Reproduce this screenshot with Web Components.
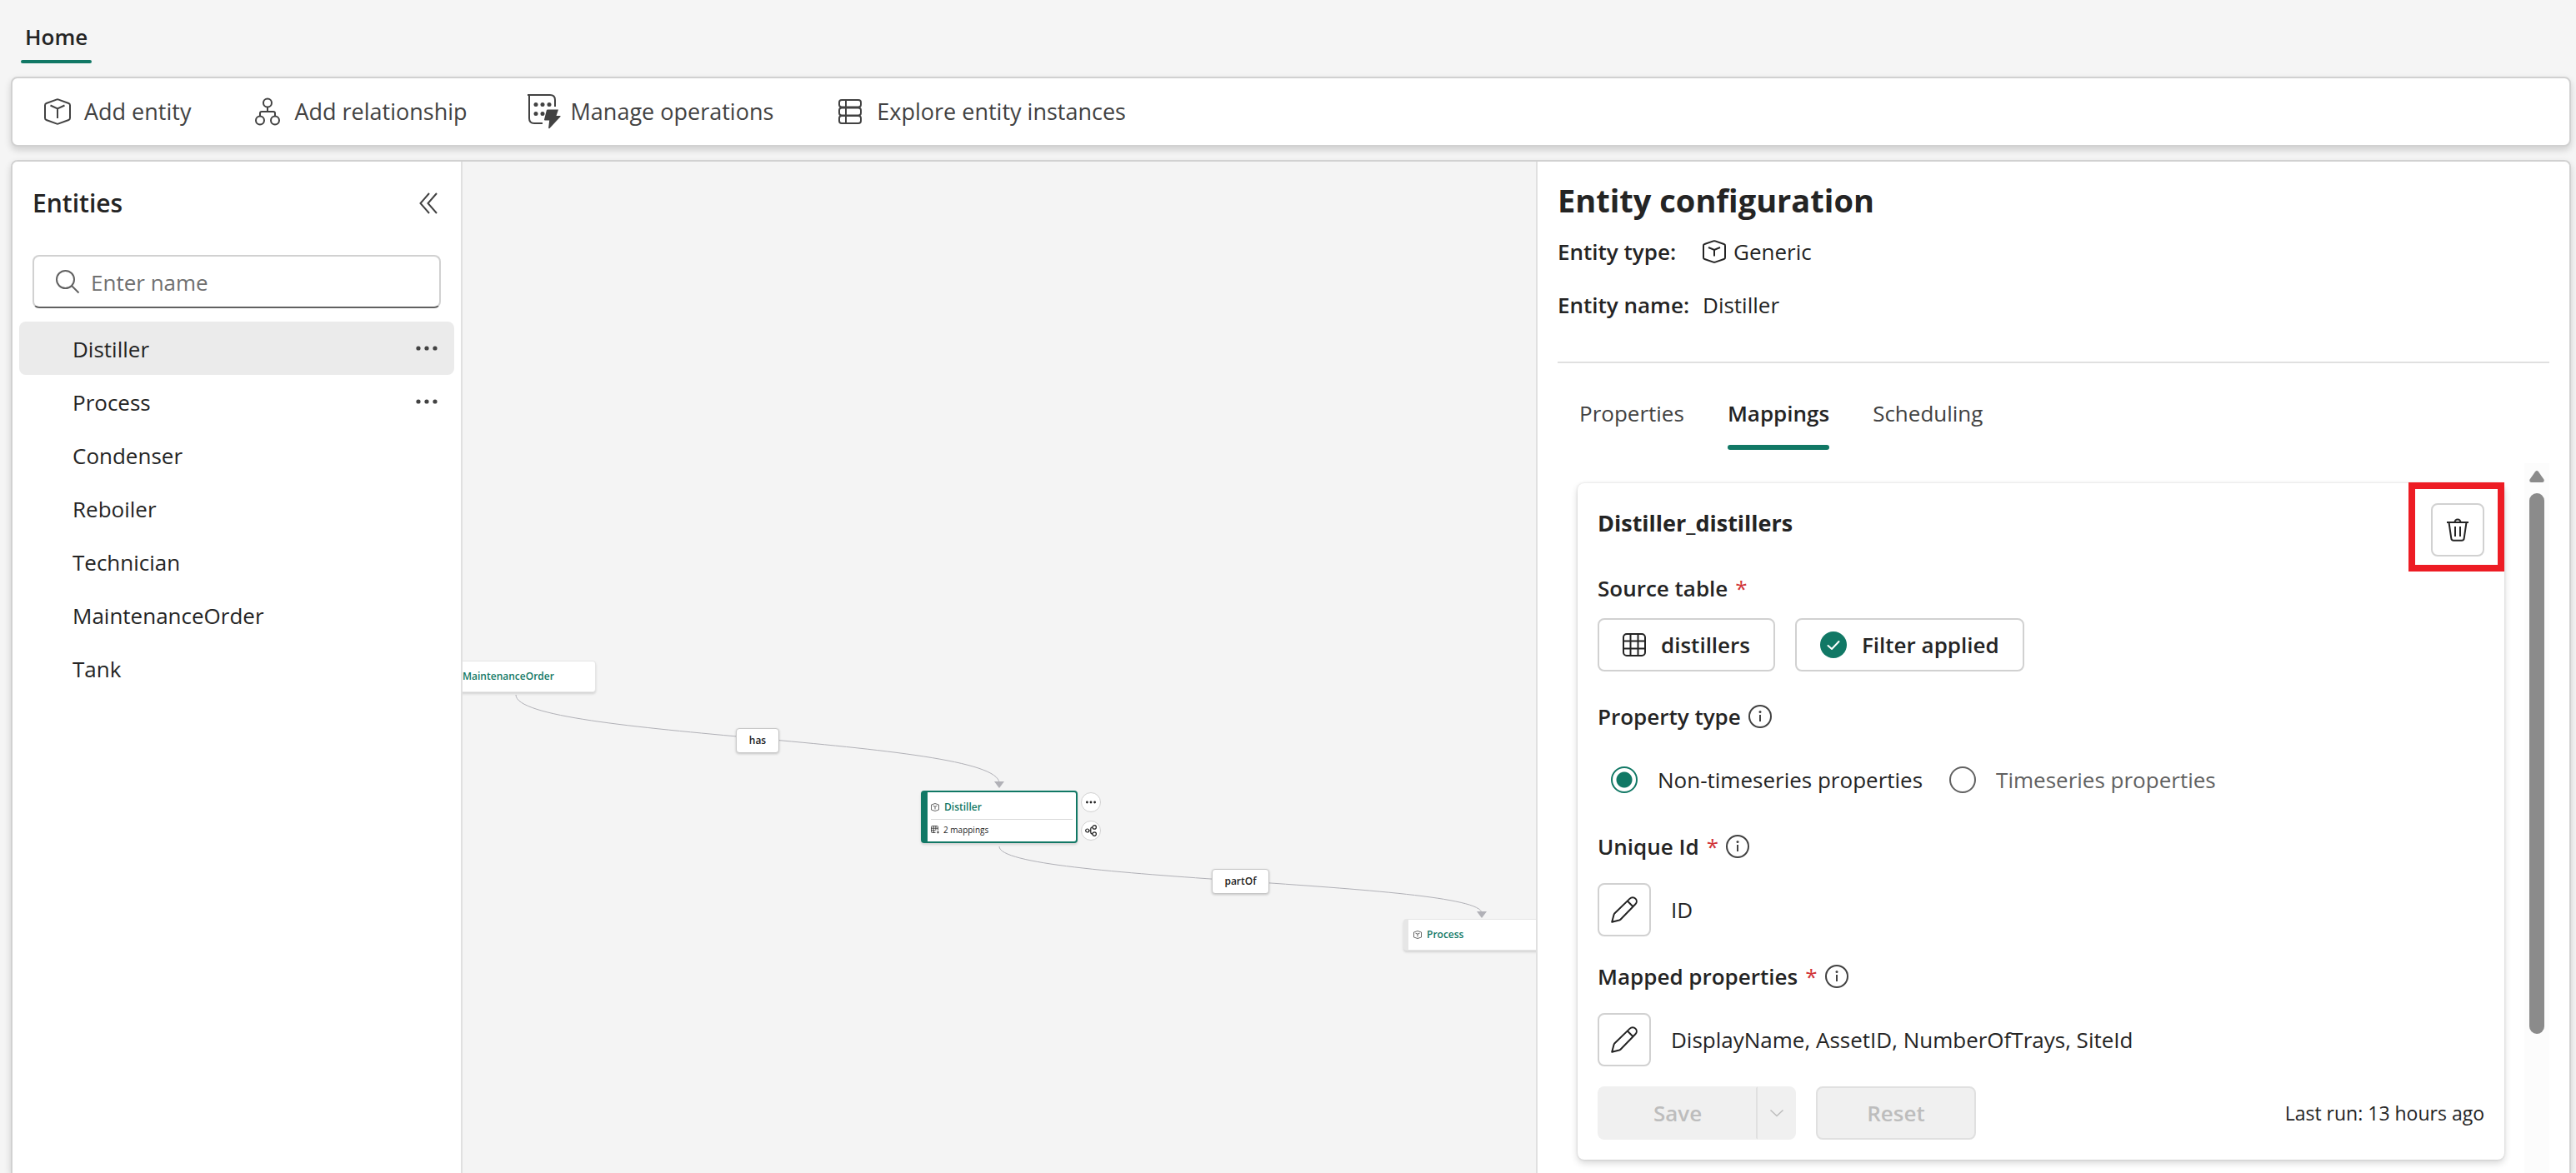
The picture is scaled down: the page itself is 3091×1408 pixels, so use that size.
<!DOCTYPE html>
<html lang="en">
<head>
<meta charset="utf-8">
<title>Entity configuration</title>
<style>
	html, body {
		margin: 0;
		height: 100%;
	}

	body {
		background: #f5f5f5;
		color: #242424;
		font-family: "Open Sans", "Noto Sans", sans-serif;
		font-size: 26px;
		line-height: 40px;
		overflow: hidden;
	}
</style>
</head>
<body>
<ontology-app></ontology-app>

<script>
// name: [width, height, markup]
const ICONS = {
	cube: [32, 32, '<path d="M14.6 1.6a4 4 0 0 1 2.8 0L29.4 6a2.4 2.4 0 0 1 1.6 2.2v15.6a2.4 2.4 0 0 1-1.6 2.2l-12 4.4a4 4 0 0 1-2.8 0L2.6 26A2.4 2.4 0 0 1 1 23.8V8.2A2.4 2.4 0 0 1 2.6 6Z"/><path d="M7.5 8.5 16 12.5l8.5-4M16 12.5V24"/>'],
	cubeSmall: [28, 28, '<path d="M12.8 1.4a3.5 3.5 0 0 1 2.4 0L25.6 5a2 2 0 0 1 1.4 2v14a2 2 0 0 1-1.4 2l-10.4 3.6a3.5 3.5 0 0 1-2.4 0L2.4 23A2 2 0 0 1 1 21V7a2 2 0 0 1 1.4-2Z"/><path d="m7 9 7 3 7-3M14 12v7.5"/>'],
	relationship: [30, 34, '<circle cx="15" cy="6.5" r="5"/><circle cx="6" cy="27.5" r="5"/><circle cx="24" cy="27.5" r="5"/><path d="M15 11.5V17M6 22.5V19a2 2 0 0 1 2-2h14a2 2 0 0 1 2 2v3.5"/>'],
	operations: [40, 42, '<path d="M0 1h27c4 0 6 2.5 6 6v8M2 1v28c0 4 2 6 6 6h10"/><g fill="currentColor" stroke="none"><circle cx="10" cy="12.5" r="2.5"/><circle cx="18" cy="12.5" r="2.5"/><circle cx="26" cy="12.5" r="2.5"/><circle cx="10" cy="23.5" r="2.5"/><circle cx="18" cy="23.5" r="2.5"/><path d="M24 18.5h13L34.5 26H39q1 0 .5 1L26.500 41q-1.500.800-1.300-1l1-8.500H21q-1.200 0-1-1l2.800-11q.3-1 1.200-1Z"/></g>'],
	instances: [28, 30, '<rect x="1" y="1" width="26" height="8.500" rx="3"/><rect x="1" y="10.500" width="26" height="9" rx="3"/><rect x="1" y="20" width="26" height="9" rx="3"/><path d="M9 1v28"/>'],
	collapse: [22, 26, '<path d="M12 1 1.500 13 12 25M21 1 10.500 13 21 25"/>'],
	search: [28, 28, '<circle cx="11.500" cy="11.500" r="10.500"/><path d="m19 19 8.500 8.500"/>'],
	more: [26, 6, '<g fill="currentColor" stroke="none"><circle cx="3" cy="3" r="2.600"/><circle cx="13" cy="3" r="2.600"/><circle cx="23" cy="3" r="2.600"/></g>'],
	moreSmall: [12, 4, '<g fill="currentColor" stroke="none"><circle cx="1.400" cy="2" r="1.400"/><circle cx="6" cy="2" r="1.400"/><circle cx="10.600" cy="2" r="1.400"/></g>'],
	table: [28, 28, '<rect x="1" y="1" width="26" height="26" rx="4"/><path d="M9.500 1v26M18.500 1v26M1 9.500h26M1 18.500h26"/>'],
	check: [32, 32, '<circle cx="16" cy="16" r="16" fill="#117865" stroke="none"/><path stroke="#fff" stroke-linecap="round" stroke-linejoin="round" d="m9.500 17 4.500 4 8.500-9"/>'],
	info: [28, 28, '<circle cx="14" cy="14" r="13"/><path d="M14 12v8"/><circle cx="14" cy="8.500" r="1.500" fill="currentColor" stroke="none"/>'],
	pencil: [32, 32, '<path stroke-linejoin="round" d="M1.200 30.800 3.500 22q.3-1 1-1.700L22.700 2.600a4.700 4.700 0 0 1 6.700 6.700L11.700 27.500q-.7.7-1.700 1ZM19.800 5.500l6.700 6.700"/>'],
	trash: [26, 28, '<path d="M0 5h26M9.500 5a3.500 3.500 0 0 1 7 0M2.500 5l2.800 19a3 3 0 0 0 3 2.800h9.400a3 3 0 0 0 3-2.800l2.800-19M10 10v12M16 10v12"/>'],
	chevron: [16, 8, '<path stroke-width="1.500" d="m.5.5 7.500 7 7.500-7"/>'],
	cubeTiny: [10, 10, '<path stroke-width=".8" d="M5 .5 9.500 2v6L5 9.500.5 8V2ZM2.500 3.200 5 4.200l2.500-1M5 4.200V7.500"/>'],
	tableTiny: [10, 10, '<path stroke-width=".8" d="M5.500 8.500H1.500a1 1 0 0 1-1-1v-6a1 1 0 0 1 1-1h6a1 1 0 0 1 1 1V5.500M3.200.5v8M5.900.5v5M.5 3.200h8M.5 5.900h5M7 8h3M8.500 6.500v3"/>'],
	share: [14, 14, '<g stroke-width="1.200"><circle cx="2.700" cy="7" r="2"/><circle cx="11.200" cy="2.900" r="2.200"/><circle cx="11.200" cy="11.100" r="2.200"/><path d="M4.700 7H6.800M9 2.900q-2.200 0-2.200 2v4.200q0 2 2.200 2"/></g>']
};

class FlatIcon extends HTMLElement {
	constructor() {
		super();
		this.attachShadow({ mode: 'open' });
	}

	connectedCallback() {
		const [w, h, body] = ICONS[this.getAttribute('name')];
		this.shadowRoot.innerHTML = `
<style>
	:host { display: inline-flex; flex: none; }
	svg { display: block; overflow: visible; }
</style>
<svg width="${w}" height="${h}" viewBox="0 0 ${w} ${h}" fill="none" stroke="currentColor" stroke-width="2" aria-hidden="true">${body}</svg>`;
	}
}
customElements.define('flat-icon', FlatIcon);

// Registers an element whose shadow root is a plain clone of its template
function define(name, html) {
	const template = document.createElement('template');
	template.innerHTML = html;

	customElements.define(name, class extends HTMLElement {
		constructor() {
			super();
			this.attachShadow({ mode: 'open' });
			this.shadowRoot.appendChild(template.content.cloneNode(true));
		}
	});
}

/* ---------- toolbar ---------- */

define('tool-button', `
<style>
	:host { display: block; }
	button {
		display: flex;
		align-items: center;
		gap: 12px;
		padding: 0;
		border: none;
		background: none;
		color: #424242;
		font: inherit;
		font-size: 27px;
		font-weight: 500;
		white-space: nowrap;
		cursor: pointer;
	}
	.icon {
		display: flex;
		justify-content: center;
		width: 40px;
	}
</style>
<button type="button"><span class="icon"><slot name="icon"></slot></span><slot></slot></button>
`);

define('app-toolbar', `
<style>
	:host {
		display: flex;
		align-items: center;
		gap: 72px;
		height: 80px;
		padding: 0 34px;
		border: 2px solid #d1d1d1;
		border-radius: 8px;
		background: #fff;
		box-shadow: 0 4px 8px rgba(0, 0, 0, .16);
	}
</style>
<tool-button><flat-icon slot="icon" name="cube"></flat-icon>Add entity</tool-button>
<tool-button><flat-icon slot="icon" name="relationship"></flat-icon>Add relationship</tool-button>
<tool-button><flat-icon slot="icon" name="operations"></flat-icon>Manage operations</tool-button>
<tool-button><flat-icon slot="icon" name="instances"></flat-icon>Explore entity instances</tool-button>
`);

/* ---------- entity list ---------- */

class EntityItem extends HTMLElement {
	constructor() {
		super();
		this.attachShadow({ mode: 'open' });
		this.shadowRoot.innerHTML = `
<style>
	:host {
		display: flex;
		align-items: center;
		height: 64px;
		padding: 0 20px 0 64px;
		border-radius: 8px;
	}
	:host([selected]) { background: #ebebeb; }
	span {
		flex: 1;
		padding-top: 2px;
	}
	button {
		display: flex;
		padding: 8px 0;
		border: none;
		background: none;
		color: #424242;
		cursor: pointer;
	}
	:host(:not([menu])) button { display: none; }
</style>
<span><slot></slot></span>
<button type="button" aria-label="More options"><flat-icon name="more"></flat-icon></button>`;
	}

	connectedCallback() {
		this.setAttribute('role', 'listitem');
		this.addEventListener('click', this._select);
	}

	disconnectedCallback() {
		this.removeEventListener('click', this._select);
	}

	_select() {
		for (const item of this.parentNode.querySelectorAll('entity-item')) {
			item.toggleAttribute('selected', item === this);
		}
	}
}
customElements.define('entity-item', EntityItem);

define('entity-panel', `
<style>
	:host {
		display: block;
		box-sizing: border-box;
		padding: 28px 8px 0;
		border-right: 2px solid #e0e0e0;
		background: #fff;
	}
	header {
		display: flex;
		align-items: center;
		justify-content: space-between;
		margin: 0 20px 40px 16px;
	}
	h2 {
		margin: 0;
		font-size: 30px;
		line-height: 44px;
		font-weight: 600;
	}
	header button {
		display: flex;
		padding: 0;
		border: none;
		background: none;
		color: #424242;
	}
	.search {
		display: flex;
		align-items: center;
		gap: 14px;
		height: 60px;
		margin: 0 16px 16px;
		padding: 0 26px;
		border: 2px solid #d1d1d1;
		border-bottom-color: #616161;
		border-radius: 8px;
		color: #616161;
	}
	input {
		flex: 1;
		min-width: 0;
		padding: 2px 0 0;
		border: none;
		outline: none;
		background: none;
		font: inherit;
	}
	input::placeholder { color: #707070; }
</style>
<header>
	<h2>Entities</h2>
	<button type="button" aria-label="Collapse"><flat-icon name="collapse"></flat-icon></button>
</header>
<label class="search">
	<flat-icon name="search"></flat-icon>
	<input type="text" placeholder="Enter name" aria-label="Enter name">
</label>
<div role="list">
	<entity-item selected menu>Distiller</entity-item>
	<entity-item menu>Process</entity-item>
	<entity-item>Condenser</entity-item>
	<entity-item>Reboiler</entity-item>
	<entity-item>Technician</entity-item>
	<entity-item>MaintenanceOrder</entity-item>
	<entity-item>Tank</entity-item>
</div>
`);

/* ---------- graph ---------- */

define('graph-node', `
<style>
	:host {
		position: absolute;
		box-sizing: border-box;
		width: 188px;
		padding: 0 6px;
		border: 1px solid #e6e6e6;
		border-left-width: 6px;
		border-radius: 4px;
		background: #fff;
		box-shadow: 0 2px 3px rgba(0, 0, 0, .14);
		font-size: 12px;
		line-height: 16px;
	}
	:host([selected]) {
		padding: 4px 4px 2px;
		border: 2px solid #117865;
		border-left-width: 8px;
	}
	.title {
		display: flex;
		align-items: center;
		gap: 6px;
		height: 36px;
		color: #424242;
	}
	:host([selected]) .title { height: 28px; }
	b {
		color: #117865;
		font-weight: 600;
	}
</style>
<div class="title"><flat-icon name="cubeTiny"></flat-icon><b><slot></slot></b></div>
<slot name="details"></slot>
`);

define('edge-label', `
<style>
	:host {
		position: absolute;
		box-sizing: border-box;
		height: 30px;
		border: 1px solid #c7c7c7;
		border-radius: 4px;
		background: #fff;
		box-shadow: 0 1px 3px rgba(0, 0, 0, .2);
		font-size: 12px;
		line-height: 28px;
		font-weight: 600;
		text-align: center;
	}
</style>
<slot></slot>
`);

define('graph-canvas', `
<style>
	:host {
		display: block;
		position: relative;
		overflow: hidden;
		background: #f4f4f4;
	}
	.edges {
		position: absolute;
		left: 0;
		top: 0;
		width: 100%;
		height: 100%;
	}
	.details {
		display: flex;
		align-items: center;
		gap: 5px;
		height: 24px;
		border-top: 1px solid #d9d9d9;
		font-size: 10px;
	}
	.action {
		position: absolute;
		display: flex;
		align-items: center;
		justify-content: center;
		width: 24px;
		height: 24px;
		padding: 0;
		border: 1px solid #d1d1d1;
		border-radius: 50%;
		background: #fff;
		color: #242424;
	}
	#order { left: -28px; top: 599px; }
	#distiller { left: 550px; top: 755px; }
	#process { left: 1129px; top: 909px; }
	#has { left: 328px; top: 680px; width: 52px; }
	#part-of { left: 899px; top: 849px; width: 69px; }
	#menu { left: 742px; top: 757px; }
	#expand { left: 742px; top: 791px; }
</style>
<svg class="edges" fill="none" stroke="#b1b1b7" aria-hidden="true">
	<path d="M64 640C64 692 644 692 644 746M644 822C644 864 1223 864 1223 902"/>
	<path fill="#b1b1b7" stroke="none" d="M638 744h12l-6 8ZM1217 900h12l-6 8Z"/>
</svg>
<graph-node id="order">MaintenanceOrder</graph-node>
<edge-label id="has">has</edge-label>
<graph-node id="distiller" selected>Distiller
	<div class="details" slot="details"><flat-icon name="tableTiny"></flat-icon>2 mappings</div>
</graph-node>
<button class="action" id="menu" type="button" aria-label="More"><flat-icon name="moreSmall"></flat-icon></button>
<button class="action" id="expand" type="button" aria-label="Expand"><flat-icon name="share"></flat-icon></button>
<edge-label id="part-of">partOf</edge-label>
<graph-node id="process">Process</graph-node>
`);

/* ---------- configuration ---------- */

define('outline-button', `
<style>
	:host { display: block; }
	button {
		display: flex;
		align-items: center;
		justify-content: center;
		gap: 18px;
		box-sizing: border-box;
		min-width: 64px;
		height: 64px;
		padding: 0 var(--pad, 0);
		border: 2px solid #d1d1d1;
		border-radius: 8px;
		background: #fff;
		color: #242424;
		font: inherit;
		font-weight: 600;
		white-space: nowrap;
		cursor: pointer;
	}
</style>
<button type="button"><slot></slot></button>
`);

class FieldLabel extends HTMLElement {
	constructor() {
		super();
		this.attachShadow({ mode: 'open' });
		this.shadowRoot.innerHTML = `
<style>
	:host {
		display: flex;
		align-items: center;
		gap: 9px;
		height: 40px;
		font-weight: 600;
	}
	.required {
		color: #d13438;
		font-weight: 400;
	}
	flat-icon { color: #424242; }
	:host(:not([required])) .required,
	:host(:not([info])) flat-icon { display: none; }
</style>
<slot></slot><span class="required">*</span><flat-icon name="info"></flat-icon>`;
	}
}
customElements.define('field-label', FieldLabel);

define('mapping-card', `
<style>
	:host {
		display: block;
		padding: 24px;
		border-radius: 8px;
		background: #fff;
		box-shadow: 0 0 3px rgba(0, 0, 0, .14), 0 4px 8px rgba(0, 0, 0, .16);
	}
	header {
		display: flex;
		align-items: flex-start;
		justify-content: space-between;
		margin-bottom: 18px;
	}
	h3 {
		margin: 4px 0 0;
		font-size: 27px;
		font-weight: 700;
	}
	.delete { position: relative; }
	.highlight {
		position: absolute;
		inset: -25px -24px -18px -27px;
		border: 8px solid #ed1c24;
		pointer-events: none;
	}
	.row {
		display: flex;
		align-items: center;
		gap: 24px;
	}
	.source {
		--pad: 28px;
		margin: 16px 0 34px;
	}
	fieldset {
		display: flex;
		gap: 32px;
		margin: 36px 0 40px;
		padding: 0 0 0 16px;
		border: none;
	}
	fieldset label {
		display: flex;
		align-items: center;
		gap: 24px;
		white-space: nowrap;
	}
	label.muted { color: #616161; }
	input {
		appearance: none;
		box-sizing: border-box;
		width: 32px;
		height: 32px;
		margin: 0;
		border: 2px solid #616161;
		border-radius: 50%;
	}
	input:checked {
		border-color: #117865;
		background: radial-gradient(circle, #117865 9px, transparent 10px);
	}
	.value { margin: 24px 0 28px; }
	.value + .actions { margin-top: -4px; }
	.actions button {
		box-sizing: border-box;
		height: 64px;
		padding: 0;
		border: 2px solid #f0f0f0;
		background: #f0f0f0;
		color: #bdbdbd;
		font: inherit;
		font-weight: 600;
	}
	.split { display: flex; }
	.split .save {
		width: 192px;
		border-right-color: #e0e0e0;
		border-radius: 8px 0 0 8px;
	}
	.split .open {
		display: flex;
		align-items: center;
		justify-content: center;
		width: 46px;
		border-radius: 0 8px 8px 0;
	}
	.actions .reset {
		width: 192px;
		border-color: #e0e0e0;
		border-radius: 8px;
	}
	small {
		margin-left: auto;
		font-size: 23px;
	}
</style>
<header>
	<h3>Distiller_distillers</h3>
	<div class="delete">
		<outline-button aria-label="Delete mapping"><flat-icon name="trash"></flat-icon></outline-button>
		<div class="highlight"></div>
	</div>
</header>
<field-label required>Source table</field-label>
<div class="row source">
	<outline-button><flat-icon name="table"></flat-icon>distillers</outline-button>
	<outline-button><flat-icon name="check"></flat-icon>Filter applied</outline-button>
</div>
<field-label info>Property type</field-label>
<fieldset aria-label="Property type">
	<label><input type="radio" name="type" checked>Non-timeseries properties</label>
	<label class="muted"><input type="radio" name="type">Timeseries properties</label>
</fieldset>
<field-label required info>Unique Id</field-label>
<div class="row value">
	<outline-button aria-label="Edit unique id"><flat-icon name="pencil"></flat-icon></outline-button>
	<span>ID</span>
</div>
<field-label required info>Mapped properties</field-label>
<div class="row value">
	<outline-button aria-label="Edit mapped properties"><flat-icon name="pencil"></flat-icon></outline-button>
	<span>DisplayName, AssetID, NumberOfTrays, SiteId</span>
</div>
<div class="row actions">
	<div class="split">
		<button class="save" type="button" disabled>Save</button>
		<button class="open" type="button" disabled aria-label="More save options"><flat-icon name="chevron"></flat-icon></button>
	</div>
	<button class="reset" type="button" disabled>Reset</button>
	<small>Last run: 13 hours ago</small>
</div>
`);

define('config-panel', `
<style>
	:host {
		display: flex;
		flex-direction: column;
		box-sizing: border-box;
		padding: 20px 24px 0;
		border-left: 2px solid #e0e0e0;
		background: #fff;
	}
	h1 {
		margin: 0 0 16px;
		font-size: 38px;
		line-height: 52px;
		font-weight: 700;
	}
	dl {
		display: grid;
		grid-template-columns: max-content 1fr;
		gap: 24px 16px;
		margin: 0;
		padding-bottom: 48px;
		border-bottom: 2px solid #e0e0e0;
	}
	dt { font-weight: 600; }
	dd {
		display: flex;
		align-items: center;
		gap: 9px;
		margin: 0;
	}
	nav {
		display: flex;
		gap: 52px;
		margin: 40px 26px 16px;
	}
	nav button {
		padding: 0;
		border: none;
		background: none;
		color: #424242;
		font: inherit;
	}
	nav button::after {
		content: "";
		display: block;
		height: 6px;
		margin-top: 18px;
		border-radius: 3px;
	}
	nav button.active {
		color: #242424;
		font-weight: 600;
	}
	nav button.active::after { background: #117865; }
	.body {
		display: flex;
		flex: 1;
		gap: 24px;
		min-height: 0;
	}
	mapping-card {
		flex: 1;
		align-self: flex-start;
		margin: 24px 0 16px 24px;
	}
	.scrollbar {
		display: flex;
		flex-direction: column;
		align-items: center;
		gap: 13px;
		width: 30px;
		padding-top: 9px;
		background: #fcfcfc;
	}
	.thumb {
		width: 18px;
		height: 77%;
		border-radius: 9px;
		background: #8b8b8b;
	}
</style>
<h1>Entity configuration</h1>
<dl>
	<dt>Entity type:</dt><dd><flat-icon name="cubeSmall"></flat-icon>Generic</dd>
	<dt>Entity name:</dt><dd>Distiller</dd>
</dl>
<nav>
	<button type="button">Properties</button>
	<button type="button" class="active">Mappings</button>
	<button type="button">Scheduling</button>
</nav>
<div class="body">
	<mapping-card></mapping-card>
	<div class="scrollbar">
		<svg width="18" height="14" viewBox="0 0 18 14" fill="#8b8b8b" aria-hidden="true"><path d="M7 1.300q2-2.400 4 0l6.500 9.200q1 3.300-2 3.500h-13q-3-.2-2-3.500Z"/></svg>
		<div class="thumb"></div>
	</div>
</div>
`);

/* ---------- page ---------- */

define('ontology-app', `
<style>
	:host {
		display: flex;
		flex-direction: column;
		height: 100vh;
		padding: 0 6px 0 13px;
		box-sizing: border-box;
	}
	.tab {
		align-self: flex-start;
		margin: 24px 0 16px 12px;
		padding: 0 5px;
		border: none;
		background: none;
		color: #242424;
		font: inherit;
		font-weight: 600;
	}
	.tab::after {
		content: "";
		display: block;
		height: 4px;
		margin: 8px -5px 0;
		border-radius: 2px;
		background: #117865;
	}
	app-toolbar { flex: none; }
	main {
		display: grid;
		grid-template-columns: 540px 1fr 1240px;
		flex: 1;
		min-height: 0;
		margin-top: 16px;
		border: 2px solid #d1d1d1;
		border-bottom: none;
		border-radius: 8px 8px 0 0;
		overflow: hidden;
		box-shadow: 0 4px 8px rgba(0, 0, 0, .16);
	}
</style>
<button class="tab" type="button">Home</button>
<app-toolbar></app-toolbar>
<main>
	<entity-panel></entity-panel>
	<graph-canvas></graph-canvas>
	<config-panel></config-panel>
</main>
`);
</script>
</body>
</html>
